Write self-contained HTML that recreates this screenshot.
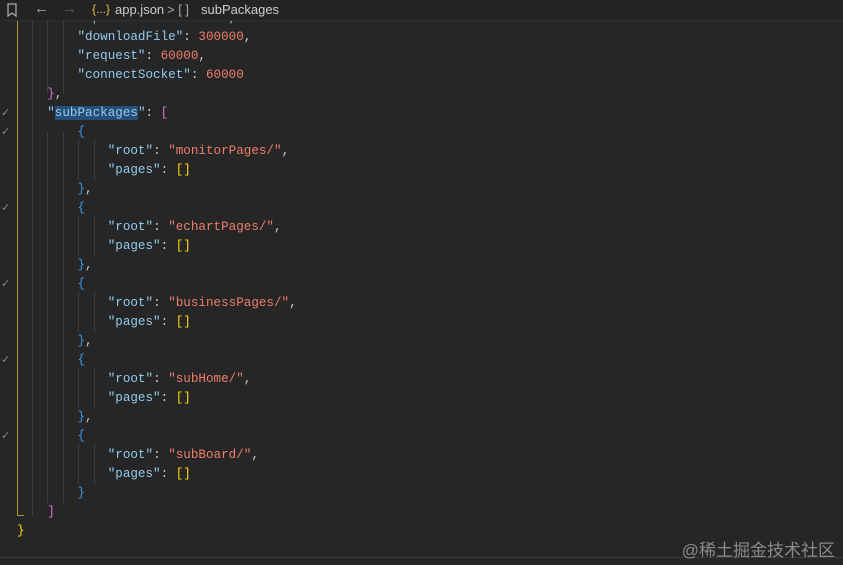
<!DOCTYPE html><html><head><style>
body{margin:0;width:843px;height:565px;background:#262626;overflow:hidden;position:relative;font-family:"Liberation Mono",monospace;}
.top{position:absolute;left:0;top:0;width:843px;height:20px;background:#232323;border-bottom:1px solid #2f2f2f;font-family:"Liberation Sans",sans-serif;font-size:13px;color:#ccc;z-index:2}
.l{position:absolute;left:17px;font-size:12.6px;line-height:19px;height:19px;white-space:pre;color:#ccc}
.k{color:#92cbef}.s{color:#ee7e6a}.n{color:#ee7e6a}.y{color:#ffd700}.p{color:#da70d6}.b{color:#3a9ae8}
.g{position:absolute;width:1px;background:#3d3d3d}
.c{position:absolute;left:1px;color:#888;font-size:11px;font-family:"DejaVu Sans",sans-serif}
</style></head><body>
<div class="top">
<svg style="position:absolute;left:6px;top:3px" width="12" height="14"><path d="M2 1h8v12l-4-3-4 3z" fill="none" stroke="#aaa" stroke-width="1.3"/></svg>
<span style="position:absolute;left:34px;top:0;color:#aaa;font-size:15px">←</span>
<span style="position:absolute;left:62px;top:0;color:#555;font-size:15px">→</span>
<span style="position:absolute;left:92px;top:2px;color:#e2c04c;font-size:12px">{...}</span>
<span style="position:absolute;left:115px;top:2px">app.json</span>
<span style="position:absolute;left:167px;top:2px;color:#aaa">&gt; [ ]</span>
<span style="position:absolute;left:201px;top:2px">subPackages</span>
</div>
<div class="g" style="left:17px;top:20px;height:496px;background:#a8962f"></div>
<div style="position:absolute;left:17px;top:515px;width:7px;height:1px;background:#a8962f"></div>
<div class="g" style="left:32px;top:20px;height:496px"></div>
<div class="g" style="left:47px;top:20px;height:74px"></div>
<div class="g" style="left:63px;top:20px;height:74px"></div>
<div class="g" style="left:47px;top:132px;height:371px"></div>
<div class="g" style="left:63px;top:132px;height:371px"></div>
<div class="g" style="left:78px;top:140px;height:40px"></div><div class="g" style="left:94px;top:140px;height:40px"></div>
<div class="g" style="left:78px;top:216px;height:40px"></div><div class="g" style="left:94px;top:216px;height:40px"></div>
<div class="g" style="left:78px;top:292px;height:40px"></div><div class="g" style="left:94px;top:292px;height:40px"></div>
<div class="g" style="left:78px;top:368px;height:40px"></div><div class="g" style="left:94px;top:368px;height:40px"></div>
<div class="g" style="left:78px;top:444px;height:40px"></div><div class="g" style="left:94px;top:444px;height:40px"></div>
<div class="l" style="top:9px">        <span class="k">"uploadFile"</span>: <span class="n">300000</span>,</div>
<div class="l" style="top:28px">        <span class="k">"downloadFile"</span>: <span class="n">300000</span>,</div>
<div class="l" style="top:47px">        <span class="k">"request"</span>: <span class="n">60000</span>,</div>
<div class="l" style="top:66px">        <span class="k">"connectSocket"</span>: <span class="n">60000</span></div>
<div class="l" style="top:85px">    <span class="p">}</span>,</div>
<div class="l" style="top:104px">    <span class="k">"<span style="background:#264f78">subPackages</span>"</span>: <span class="p">[</span></div>
<div class="c" style="top:106px">✓</div>
<div class="l" style="top:123px">        <span class="b">{</span></div><div class="c" style="top:125px">✓</div>
<div class="l" style="top:142px">            <span class="k">"root"</span>: <span class="s">"monitorPages/"</span>,</div>
<div class="l" style="top:161px">            <span class="k">"pages"</span>: <span class="y">[]</span></div>
<div class="l" style="top:180px">        <span class="b">}</span>,</div>
<div class="l" style="top:199px">        <span class="b">{</span></div><div class="c" style="top:201px">✓</div>
<div class="l" style="top:218px">            <span class="k">"root"</span>: <span class="s">"echartPages/"</span>,</div>
<div class="l" style="top:237px">            <span class="k">"pages"</span>: <span class="y">[]</span></div>
<div class="l" style="top:256px">        <span class="b">}</span>,</div>
<div class="l" style="top:275px">        <span class="b">{</span></div><div class="c" style="top:277px">✓</div>
<div class="l" style="top:294px">            <span class="k">"root"</span>: <span class="s">"businessPages/"</span>,</div>
<div class="l" style="top:313px">            <span class="k">"pages"</span>: <span class="y">[]</span></div>
<div class="l" style="top:332px">        <span class="b">}</span>,</div>
<div class="l" style="top:351px">        <span class="b">{</span></div><div class="c" style="top:353px">✓</div>
<div class="l" style="top:370px">            <span class="k">"root"</span>: <span class="s">"subHome/"</span>,</div>
<div class="l" style="top:389px">            <span class="k">"pages"</span>: <span class="y">[]</span></div>
<div class="l" style="top:408px">        <span class="b">}</span>,</div>
<div class="l" style="top:427px">        <span class="b">{</span></div><div class="c" style="top:429px">✓</div>
<div class="l" style="top:446px">            <span class="k">"root"</span>: <span class="s">"subBoard/"</span>,</div>
<div class="l" style="top:465px">            <span class="k">"pages"</span>: <span class="y">[]</span></div>
<div class="l" style="top:484px">        <span class="b">}</span></div>
<div class="l" style="top:503px">    <span class="p">]</span></div>
<div class="l" style="top:522px"><span class="y">}</span></div>
<div style="position:absolute;left:0;top:557px;width:843px;height:1px;background:#3a3a3a"></div>
<div style="position:absolute;right:8px;top:536px;font-family:'Liberation Sans','Noto Sans CJK SC',sans-serif;font-size:17px;color:#8a8a8a">@稀土掘金技术社区</div>
</body></html>
